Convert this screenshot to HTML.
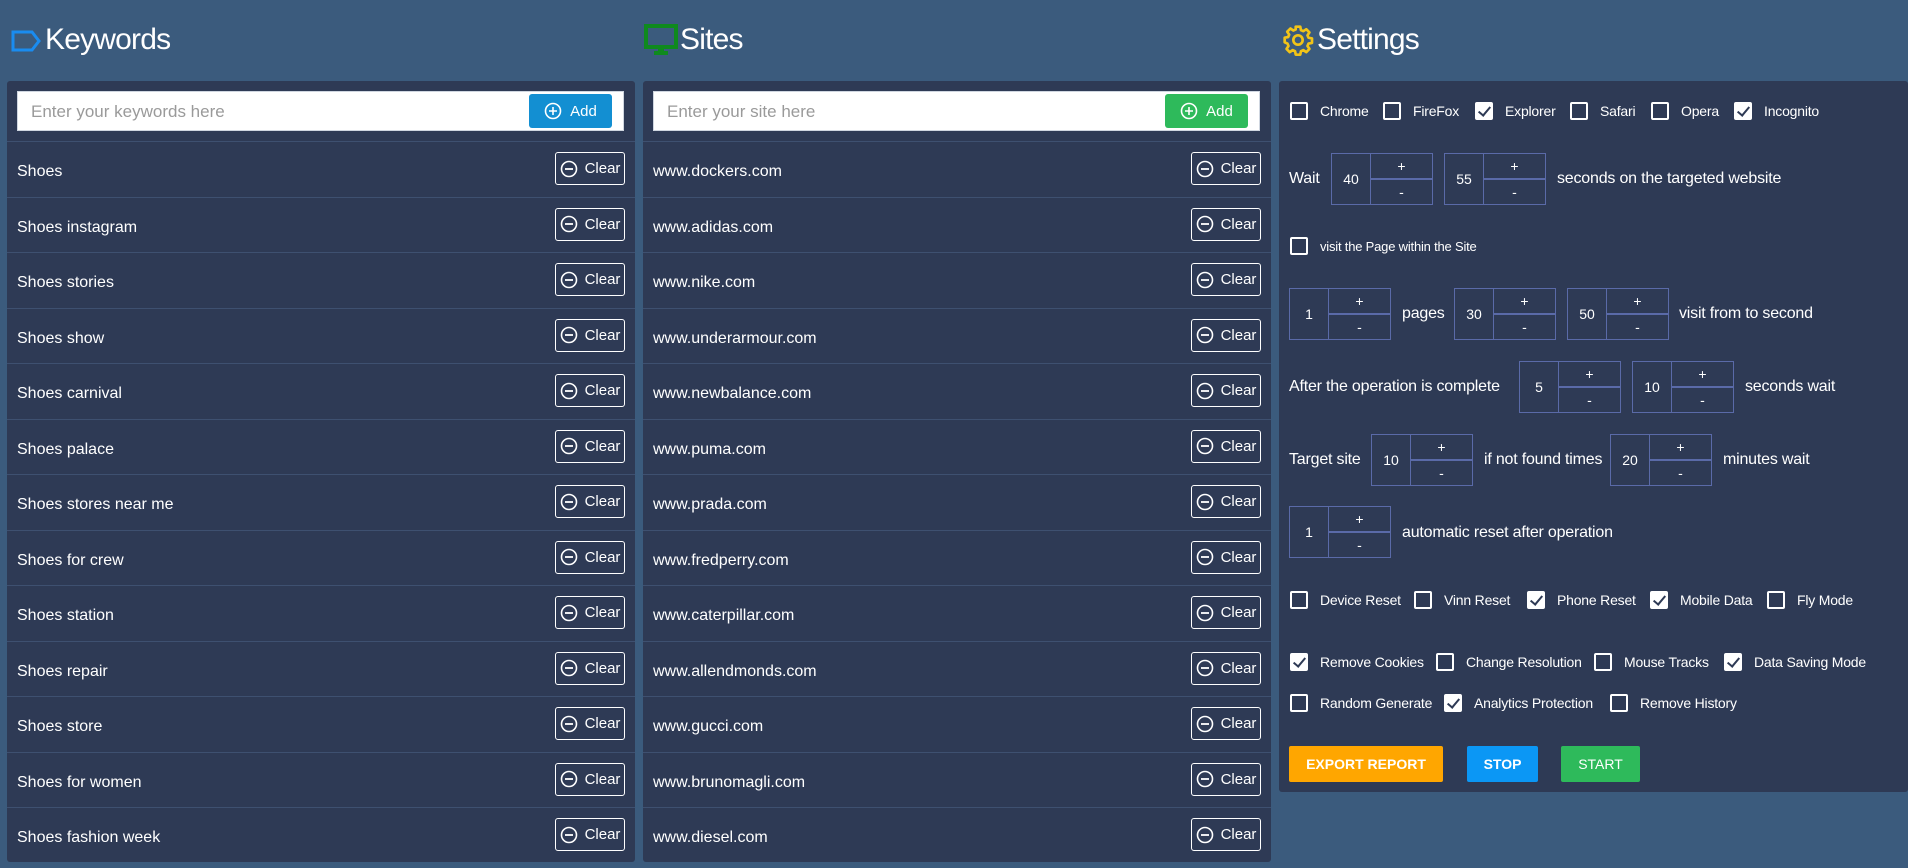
<!DOCTYPE html>
<html><head><meta charset="utf-8"><style>
*{box-sizing:border-box;margin:0;padding:0}
body{width:1908px;height:868px;background:#3b5b7d;font-family:"Liberation Sans",sans-serif;color:#fff;position:relative;overflow:hidden}
.h{position:absolute;top:23px;font-size:30px;font-weight:normal;letter-spacing:-0.8px;color:#fff}
.panel{position:absolute;top:81px;background:#2e3a55;border-radius:3px}
.inp{position:absolute;left:10px;top:10px;height:40px;background:#fff;border:1px solid #cfd6e0}
.inp .ph{position:absolute;left:13px;top:10px;color:#9a9a9a;font-size:17px}
.add{position:absolute;top:2px;width:83px;height:34px;border-radius:3px;font-size:15px;color:#fff;display:flex;align-items:center;justify-content:center;gap:8px}
.row{position:absolute;left:0;right:0;height:55.5px;border-top:1px solid #3e5070}
.row .t{position:absolute;left:10px;top:21px;font-size:16px}
.clr{position:absolute;right:10px;top:10px;width:70px;height:33px;border:1px solid #fff;border-radius:3px;font-size:15px;display:flex;align-items:center;justify-content:center;gap:7px}
.s{position:absolute;font-size:16px;white-space:nowrap;letter-spacing:-0.2px}
.cbl{position:absolute;display:flex;align-items:center;font-size:14px;white-space:nowrap;letter-spacing:-0.2px}
.cb{width:18px;height:18px;border:2px solid #fff;border-radius:2px;margin-right:12px;position:relative}
.cb.on{background:#fff}
.cb.on:after{content:"";position:absolute;left:4px;top:0px;width:5px;height:10px;border:solid #2e3a55;border-width:0 2px 2px 0;transform:rotate(40deg)}
.sp{position:absolute;width:102px;height:52px;border:1px solid #5a6aa8;display:flex}
.sp .n{width:39px;border-right:1px solid #5a6aa8;display:flex;align-items:center;justify-content:center;font-size:14px}
.sp .pm{flex:1;display:flex;flex-direction:column}
.sp .pm div{flex:1;display:flex;align-items:center;justify-content:center;font-size:14px}
.sp .pm div:first-child{border-bottom:2px solid #5a6aa8}
.btn{position:absolute;top:746px;height:36px;border-radius:2px;display:flex;align-items:center;justify-content:center;font-size:14px;font-weight:bold;color:#fff}
</style></head><body>

<svg style="position:absolute;left:11px;top:30px" width="30" height="22" viewBox="0 0 30 22"><path d="M2 2H21L28 11L21 20H2Z" fill="none" stroke="#1a8cf0" stroke-width="3"/></svg>
<div class="h" style="left:45px">Keywords</div>
<svg style="position:absolute;left:644px;top:24px" width="34" height="33" viewBox="0 0 34 33"><rect x="2" y="2" width="30" height="21" fill="none" stroke="#0f8a1e" stroke-width="4"/><rect x="14" y="23" width="6" height="5" fill="#0f8a1e"/><rect x="10" y="27" width="14" height="4" fill="#0f8a1e"/></svg>
<div class="h" style="left:680px">Sites</div>
<svg style="position:absolute;left:1282px;top:24px" width="32" height="32" viewBox="0 0 24 24"><path d="M12 8.5a3.5 3.5 0 1 0 0 7a3.5 3.5 0 1 0 0-7z" fill="none" stroke="#f2c418" stroke-width="2"/><path d="M10.3 2h3.4l.5 2.6 1.8.8 2.2-1.5 2.4 2.4-1.5 2.2.8 1.8 2.6.5v3.4l-2.6.5-.8 1.8 1.5 2.2-2.4 2.4-2.2-1.5-1.8.8-.5 2.6h-3.4l-.5-2.6-1.8-.8-2.2 1.5-2.4-2.4 1.5-2.2-.8-1.8L2 13.7v-3.4l2.6-.5.8-1.8-1.5-2.2 2.4-2.4 2.2 1.5 1.8-.8z" fill="none" stroke="#f2c418" stroke-width="2" stroke-linejoin="round"/></svg>
<div class="h" style="left:1317px">Settings</div>

<!-- Keywords -->
<div class="panel" style="left:7px;width:628px;height:781px">
 <div class="inp" style="width:607px"><div class="ph">Enter your keywords here</div>
  <div class="add" style="left:511px;background:#138fd2"><svg width="18" height="18" viewBox="0 0 18 18"><circle cx="9" cy="9" r="7.5" fill="none" stroke="#fff" stroke-width="1.6"/><path d="M9 5v8M5 9h8" stroke="#fff" stroke-width="1.6"/></svg>Add</div></div>
 <div id="kw"></div>
</div>
<!-- Sites -->
<div class="panel" style="left:643px;width:628px;height:781px">
 <div class="inp" style="width:607px"><div class="ph">Enter your site here</div>
  <div class="add" style="left:511px;background:#2eba5b"><svg width="18" height="18" viewBox="0 0 18 18"><circle cx="9" cy="9" r="7.5" fill="none" stroke="#fff" stroke-width="1.6"/><path d="M9 5v8M5 9h8" stroke="#fff" stroke-width="1.6"/></svg>Add</div></div>
 <div id="st"></div>
</div>

<div class="panel" style="left:1279px;width:629px;height:711px"></div>
<div class="cbl" style="left:1290px;top:102px"><div class="cb"></div>Chrome</div>
<div class="cbl" style="left:1383px;top:102px"><div class="cb"></div>FireFox</div>
<div class="cbl" style="left:1475px;top:102px"><div class="cb on"></div>Explorer</div>
<div class="cbl" style="left:1570px;top:102px"><div class="cb"></div>Safari</div>
<div class="cbl" style="left:1651px;top:102px"><div class="cb"></div>Opera</div>
<div class="cbl" style="left:1734px;top:102px"><div class="cb on"></div>Incognito</div>

<div class="s" style="left:1289px;top:170px">Wait</div>
<div class="sp" style="left:1331px;top:153px"><div class="n">40</div><div class="pm"><div>+</div><div>-</div></div></div>
<div class="sp" style="left:1444px;top:153px"><div class="n">55</div><div class="pm"><div>+</div><div>-</div></div></div>
<div class="s" style="left:1557px;top:170px">seconds on the targeted website</div>

<div class="cbl" style="left:1290px;top:237px;font-size:13px"><div class="cb"></div>visit the Page within the Site</div>

<div class="sp" style="left:1289px;top:288px"><div class="n">1</div><div class="pm"><div>+</div><div>-</div></div></div>
<div class="s" style="left:1402px;top:305px">pages</div>
<div class="sp" style="left:1454px;top:288px"><div class="n">30</div><div class="pm"><div>+</div><div>-</div></div></div>
<div class="sp" style="left:1567px;top:288px"><div class="n">50</div><div class="pm"><div>+</div><div>-</div></div></div>
<div class="s" style="left:1679px;top:305px">visit from to second</div>

<div class="s" style="left:1289px;top:378px">After the operation is complete</div>
<div class="sp" style="left:1519px;top:361px"><div class="n">5</div><div class="pm"><div>+</div><div>-</div></div></div>
<div class="sp" style="left:1632px;top:361px"><div class="n">10</div><div class="pm"><div>+</div><div>-</div></div></div>
<div class="s" style="left:1745px;top:378px">seconds wait</div>

<div class="s" style="left:1289px;top:451px">Target site</div>
<div class="sp" style="left:1371px;top:434px"><div class="n">10</div><div class="pm"><div>+</div><div>-</div></div></div>
<div class="s" style="left:1484px;top:451px">if not found times</div>
<div class="sp" style="left:1610px;top:434px"><div class="n">20</div><div class="pm"><div>+</div><div>-</div></div></div>
<div class="s" style="left:1723px;top:451px">minutes wait</div>

<div class="sp" style="left:1289px;top:506px"><div class="n">1</div><div class="pm"><div>+</div><div>-</div></div></div>
<div class="s" style="left:1402px;top:524px">automatic reset after operation</div>

<div class="cbl" style="left:1290px;top:591px"><div class="cb"></div>Device Reset</div>
<div class="cbl" style="left:1414px;top:591px"><div class="cb"></div>Vinn Reset</div>
<div class="cbl" style="left:1527px;top:591px"><div class="cb on"></div>Phone Reset</div>
<div class="cbl" style="left:1650px;top:591px"><div class="cb on"></div>Mobile Data</div>
<div class="cbl" style="left:1767px;top:591px"><div class="cb"></div>Fly Mode</div>

<div class="cbl" style="left:1290px;top:653px"><div class="cb on"></div>Remove Cookies</div>
<div class="cbl" style="left:1436px;top:653px"><div class="cb"></div>Change Resolution</div>
<div class="cbl" style="left:1594px;top:653px"><div class="cb"></div>Mouse Tracks</div>
<div class="cbl" style="left:1724px;top:653px"><div class="cb on"></div>Data Saving Mode</div>

<div class="cbl" style="left:1290px;top:694px"><div class="cb"></div>Random Generate</div>
<div class="cbl" style="left:1444px;top:694px"><div class="cb on"></div>Analytics Protection</div>
<div class="cbl" style="left:1610px;top:694px"><div class="cb"></div>Remove History</div>

<div class="btn" style="left:1289px;width:154px;background:#ffa600">EXPORT REPORT</div>
<div class="btn" style="left:1467px;width:71px;background:#0b97f5">STOP</div>
<div class="btn" style="left:1561px;width:79px;background:#2eba5b;font-weight:normal">START</div>

<script>
function fill(id,arr){var h='';arr.forEach(function(t,i){h+='<div class="row" style="top:'+(60+i*55.5)+'px"><div class="t">'+t+'</div><div class="clr"><svg width="18" height="18" viewBox="0 0 18 18"><circle cx="9" cy="9" r="7.5" fill="none" stroke="#fff" stroke-width="1.6"/><path d="M5 9h8" stroke="#fff" stroke-width="1.8"/></svg>Clear</div></div>'});document.getElementById(id).innerHTML=h;}
fill('kw',["Shoes","Shoes instagram","Shoes stories","Shoes show","Shoes carnival","Shoes palace","Shoes stores near me","Shoes for crew","Shoes station","Shoes repair","Shoes store","Shoes for women","Shoes fashion week"]);
fill('st',["www.dockers.com","www.adidas.com","www.nike.com","www.underarmour.com","www.newbalance.com","www.puma.com","www.prada.com","www.fredperry.com","www.caterpillar.com","www.allendmonds.com","www.gucci.com","www.brunomagli.com","www.diesel.com"]);
</script>
</body></html>
